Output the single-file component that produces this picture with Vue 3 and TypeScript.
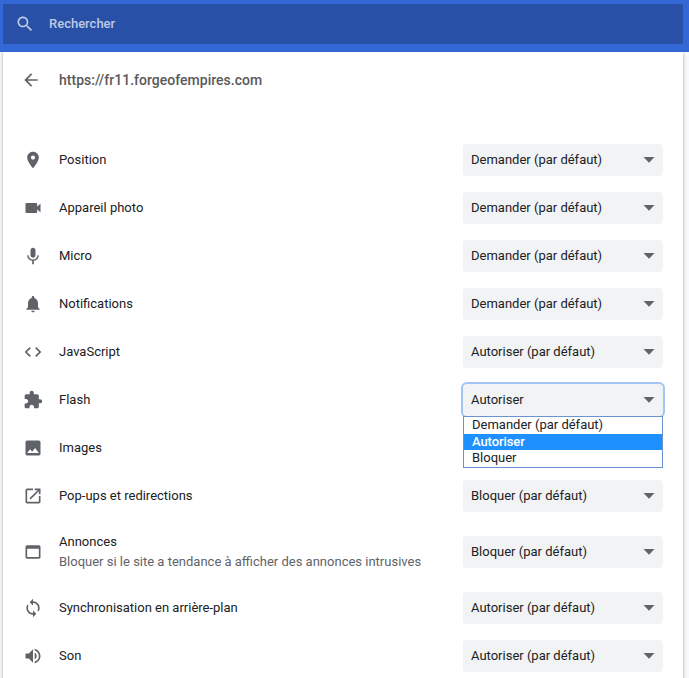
<script setup lang="ts">
import { ref } from 'vue'

interface Permission {
  label: string
  detail?: string
  value?: string
  icon: string
  open?: boolean
}

const options: string[] = ['Demander (par défaut)', 'Autoriser', 'Bloquer']
const selected = ref('Autoriser')

const permissions: Permission[] = [
  {
    label: 'Position',
    value: 'Demander (par défaut)',
    icon: 'M12 2C8.13 2 5 5.13 5 9c0 5.25 7 13 7 13s7-7.75 7-13c0-3.87-3.13-7-7-7zm0 9.5c-1.38 0-2.5-1.12-2.5-2.5s1.12-2.5 2.5-2.5 2.5 1.12 2.5 2.5-1.12 2.5-2.5 2.5z',
  },
  {
    label: 'Appareil photo',
    value: 'Demander (par défaut)',
    icon: 'M17 10.5V7c0-.55-.45-1-1-1H4c-.55 0-1 .45-1 1v10c0 .55.45 1 1 1h12c.55 0 1-.45 1-1v-3.5l4 4v-11l-4 4z',
  },
  {
    label: 'Micro',
    value: 'Demander (par défaut)',
    icon: 'M12 14c1.66 0 2.99-1.34 2.99-3L15 5c0-1.66-1.34-3-3-3S9 3.34 9 5v6c0 1.66 1.34 3 3 3zm5.3-3c0 3-2.54 5.1-5.3 5.1S6.7 14 6.7 11H5c0 3.41 2.72 6.23 6 6.72V22h2v-4.28c3.28-.48 6-3.3 6-6.72h-1.7z',
  },
  {
    label: 'Notifications',
    value: 'Demander (par défaut)',
    icon: 'M12 22c1.1 0 2-.9 2-2h-4c0 1.1.89 2 2 2zm6-6v-5c0-3.07-1.64-5.64-4.5-6.32V4c0-.83-.67-1.5-1.5-1.5s-1.5.67-1.5 1.5v.68C7.63 5.36 6 7.92 6 11v5l-2 2v1h16v-1l-2-2z',
  },
  {
    label: 'JavaScript',
    value: 'Autoriser (par défaut)',
    icon: 'M9.4 16.6L4.8 12l4.6-4.6L8 6l-6 6 6 6 1.4-1.4zm5.2 0l4.6-4.6-4.6-4.6L16 6l6 6-6 6-1.4-1.4z',
  },
  {
    label: 'Flash',
    value: 'Autoriser',
    icon: 'M20.5 11H19V7c0-1.1-.9-2-2-2h-4V3.5C13 2.12 11.88 1 10.5 1S8 2.12 8 3.5V5H4c-1.1 0-1.99.9-1.99 2v3.8H3.5c1.49 0 2.7 1.21 2.7 2.7s-1.21 2.7-2.7 2.7H2V20c0 1.1.9 2 2 2h3.8v-1.5c0-1.49 1.21-2.7 2.7-2.7 1.49 0 2.7 1.21 2.7 2.7V22H17c1.1 0 2-.9 2-2v-4h1.5c1.38 0 2.5-1.12 2.5-2.5S21.88 11 20.5 11z',
    open: true,
  },
  {
    label: 'Images',
    icon: 'M21 19V5c0-1.1-.9-2-2-2H5c-1.1 0-2 .9-2 2v14c0 1.1.9 2 2 2h14c1.1 0 2-.9 2-2zM8.5 13.5l2.5 3.01L14.5 12l4.5 6H5l3.5-4.5z',
  },
  {
    label: 'Pop-ups et redirections',
    value: 'Bloquer (par défaut)',
    icon: 'M19 19H5V5h7V3H5c-1.11 0-2 .9-2 2v14c0 1.1.89 2 2 2h14c1.1 0 2-.9 2-2v-7h-2v7zM14 3v2h3.59l-9.83 9.83 1.41 1.41L19 6.41V10h2V3h-7z',
  },
  {
    label: 'Annonces',
    detail: 'Bloquer si le site a tendance à afficher des annonces intrusives',
    value: 'Bloquer (par défaut)',
    icon: 'M19 4H5c-1.11 0-2 .9-2 2v12c0 1.1.89 2 2 2h14c1.1 0 2-.9 2-2V6c0-1.1-.89-2-2-2zm0 14H5V8h14v10z',
  },
  {
    label: 'Synchronisation en arrière-plan',
    value: 'Autoriser (par défaut)',
    icon: 'M12 4V1L8 5l4 4V6c3.31 0 6 2.69 6 6 0 1.01-.25 1.97-.7 2.8l1.46 1.46C19.54 15.03 20 13.57 20 12c0-4.42-3.58-8-8-8zm0 14c-3.31 0-6-2.69-6-6 0-1.01.25-1.97.7-2.8L5.24 7.74C4.46 8.97 4 10.43 4 12c0 4.42 3.58 8 8 8v3l4-4-4-4v3z',
  },
  {
    label: 'Son',
    value: 'Autoriser (par défaut)',
    icon: 'M3 9v6h4l5 5V4L7 9H3zm13.5 3c0-1.77-1.02-3.29-2.5-4.03v8.05c1.48-.73 2.5-2.25 2.5-4.02zM14 3.23v2.06c2.89.86 5 3.54 5 6.71s-2.11 5.85-5 6.71v2.06c4.01-.91 7-4.49 7-8.77s-2.99-7.86-7-8.77z',
  },
]
</script>

<template>
  <div class="page">
    <header class="toolbar">
      <label class="search">
        <svg class="search-icon" viewBox="0 0 24 24">
          <path d="M15.5 14h-.79l-.28-.27C15.41 12.59 16 11.11 16 9.5 16 5.91 13.09 3 9.5 3S3 5.91 3 9.5 5.91 16 9.5 16c1.61 0 3.09-.59 4.23-1.57l.27.28v.79l5 4.99L20.49 19l-4.99-5zm-6 0C7.01 14 5 11.99 5 9.5S7.01 5 9.5 5 14 7.01 14 9.5 11.99 14 9.5 14z" />
        </svg>
        <span class="search-text">Rechercher</span>
      </label>
    </header>

    <main class="card">
      <div class="heading">
        <svg class="back" viewBox="0 0 24 24">
          <path d="M20 11H7.83l5.59-5.59L12 4l-8 8 8 8 1.41-1.41L7.83 13H20v-2z" />
        </svg>
        <h1 class="title">https://fr11.forgeofempires.com</h1>
      </div>

      <ul class="list">
        <li v-for="item in permissions" :key="item.label" class="row" :class="{ tall: item.detail }">
          <svg class="icon" viewBox="0 0 24 24"><path :d="item.icon" /></svg>
          <div class="labels">
            <span class="label">{{ item.label }}</span>
            <span v-if="item.detail" class="detail">{{ item.detail }}</span>
          </div>
          <div v-if="item.value" class="select" :class="{ focused: item.open }">
            <span class="value">{{ item.open ? selected : item.value }}</span>
            <svg class="arrow" viewBox="0 0 12 6"><path d="M.5 .1h11L6 5.8z" /></svg>
            <ul v-if="item.open" class="menu">
              <li
                v-for="option in options"
                :key="option"
                class="option"
                :class="{ active: option === selected }"
                @click="selected = option"
              >{{ option }}</li>
            </ul>
          </div>
        </li>
      </ul>
    </main>
  </div>
</template>

<style>
body {
  background: #f8f9fa;
  overflow: hidden;
}
</style>

<style scoped>
.page {
  height: 678px;
  display: flex;
  flex-direction: column;
  overflow: hidden;
  font-family: Roboto, "Liberation Sans", sans-serif;
  font-size: 13px;
  color: #202124;
}

.toolbar {
  position: relative;
  z-index: 1;
  box-sizing: border-box;
  flex: none;
  height: 52px;
  padding: 4px 6px 8px 3px;
  background: #3367d6;
}

.search {
  box-sizing: border-box;
  height: 40px;
  display: flex;
  align-items: center;
  gap: 14px;
  padding-left: 12px;
  border-radius: 2px;
  background: #2850a7;
  color: #bdcae5;
}

.search-icon {
  width: 20px;
  height: 20px;
  fill: currentColor;
}

.search-text {
  line-height: 20px;
  padding-bottom: 1px;
  font-weight: 500;
}

.card {
  flex: 1;
  margin: 0 6px 0 3px;
  background: #fff;
  box-shadow: 0 1px 2px 0 rgba(60, 64, 67, 0.3), 0 1px 3px 1px rgba(60, 64, 67, 0.15);
}

.heading {
  height: 56px;
  display: flex;
  align-items: center;
  gap: 18px;
  padding-left: 18px;
}

.back {
  width: 20px;
  height: 20px;
  fill: #5f6368;
}

.title {
  margin: 0;
  font-size: 14px;
  font-weight: 500;
  letter-spacing: 0.015px;
  color: #5a5a5a;
}

.list {
  margin: 28px 0 0;
  padding: 0;
  list-style: none;
}

.row {
  height: 48px;
  display: flex;
  align-items: center;
  padding: 0 20px;
}

.row.tall {
  height: 64px;
}

.icon {
  width: 20px;
  height: 20px;
  margin-right: 16px;
  fill: #5f6368;
}

.labels {
  flex: 1;
  display: flex;
  flex-direction: column;
  line-height: 20px;
}

.detail {
  color: #5f6368;
}

.select {
  position: relative;
  box-sizing: border-box;
  width: 200px;
  height: 32px;
  display: flex;
  align-items: center;
  justify-content: space-between;
  padding: 0 8px;
  border-radius: 4px;
  background: #f1f3f4;
}

.select.focused {
  box-shadow: 0 0 0 2px #a3c4f9;
}

.value {
  line-height: 20px;
}

.arrow {
  width: 12px;
  height: 6px;
  fill: #5f6368;
}

.menu {
  position: absolute;
  z-index: 2;
  top: 32px;
  left: 0;
  box-sizing: border-box;
  width: 200px;
  height: 52px;
  margin: 0;
  padding: 0;
  border: 1px solid #6d93cf;
  background: #fff;
  list-style: none;
}

.option {
  height: 16px;
  padding-left: 8px;
  line-height: 16px;
}

.option:first-child {
  padding-bottom: 1px;
}

.option.active {
  background: #1e90ff;
  color: #fff;
  font-weight: 500;
  letter-spacing: -0.08px;
}
</style>
